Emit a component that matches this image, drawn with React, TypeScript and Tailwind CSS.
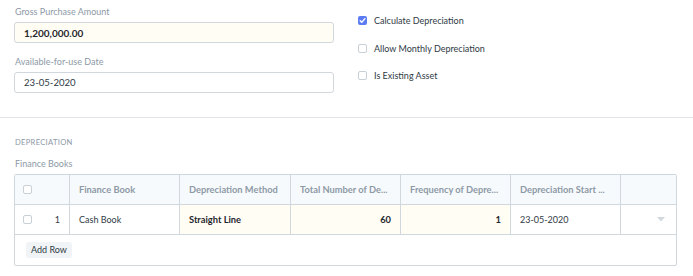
import React from "react";

const font = { fontFamily: 'Lato, "Noto Sans", sans-serif' };

function Box({ checked = false }: { checked?: boolean }) {
  if (checked) {
    return (
      <div className="w-[9px] h-[9px] rounded-[2px] bg-[#5b7cf2] flex items-center justify-center shrink-0">
        <svg width="7" height="7" viewBox="0 0 8 8">
          <path d="M1.3 4.2 L3.2 6 L6.8 1.8" stroke="white" strokeWidth="1.5" fill="none" strokeLinecap="round" strokeLinejoin="round" />
        </svg>
      </div>
    );
  }
  return <div className="w-[9px] h-[9px] rounded-[2px] border border-[#c8cfd5] bg-white shrink-0" />;
}

export default function App() {
  const cols = "grid-cols-[55px_110px_111px_110px_110px_110px_56px]";
  const cell = "flex items-center px-[9px] border-r border-[#d1d8dd] whitespace-nowrap";
  return (
    <div className="w-[693px] h-[276px] bg-white text-[#2f3a44] overflow-hidden text-[9px] leading-[12px]" style={font}>
      <div className="flex px-[14px] h-[117px]">
        <div className="w-[320px] flex flex-col pt-[6px]">
          <div className="h-[12px] pl-[1px] text-[#8d99a6]">Gross Purchase Amount</div>
          <div className="mt-[4px] h-[21px] border border-[#d1d8dd] rounded-[3px] bg-[#fffdf4] flex items-center px-[9px] text-[10px] font-bold text-[#1f272e]">
            1,200,000.00
          </div>
          <div className="mt-[13px] h-[12px] pl-[1px] text-[#8d99a6]">Available-for-use Date</div>
          <div className="mt-[4px] h-[21px] border border-[#d1d8dd] rounded-[3px] bg-white flex items-center px-[9px] text-[9.6px]">
            23-05-2020
          </div>
        </div>
        <div className="ml-[24px] flex flex-col pt-[14px]">
          <div className="h-[13px] flex items-center gap-[7px]">
            <Box checked />
            <span>Calculate Depreciation</span>
          </div>
          <div className="h-[13px] mt-[15px] flex items-center gap-[7px]">
            <Box />
            <span>Allow Monthly Depreciation</span>
          </div>
          <div className="h-[13px] mt-[14px] flex items-center gap-[7px]">
            <Box />
            <span>Is Existing Asset</span>
          </div>
        </div>
      </div>
      <div className="border-t border-[#e1e6ea]" />
      <div className="px-[14px]">
        <div className="mt-[18px] h-[12px] pl-[1px] text-[7.6px] tracking-[0.3px] text-[#8d99a6]">DEPRECIATION</div>
        <div className="mt-[10px] h-[12px] pl-[1px] text-[#8d99a6]">Finance Books</div>
        <div className="mt-[4px] w-[663px] border border-[#d1d8dd] rounded-[2px]">
          <div className={`grid ${cols} h-[30px] bg-[#f7fafc] border-b border-[#d1d8dd] font-bold text-[9.3px] text-[#8d99a6]`}>
            <div className="flex items-center pl-[8px] border-r border-[#d1d8dd]"><Box /></div>
            <div className={cell}>Finance Book</div>
            <div className={cell}>Depreciation Method</div>
            <div className={cell}>Total Number of De...</div>
            <div className={cell}>Frequency of Depre...</div>
            <div className={cell}>Depreciation Start ...</div>
            <div />
          </div>
          <div className={`grid ${cols} h-[30px] border-b border-[#d1d8dd]`}>
            <div className="flex items-center justify-between pl-[8px] pr-[9px] border-r border-[#d1d8dd]">
              <Box />
              <span>1</span>
            </div>
            <div className={cell}>Cash Book</div>
            <div className={`${cell} bg-[#fffdf4] font-bold text-[9.3px] text-[#1f272e]`}>Straight Line</div>
            <div className={`${cell} justify-end bg-[#fffdf4] font-bold text-[9.3px] text-[#1f272e]`}>60</div>
            <div className={`${cell} justify-end bg-[#fffdf4] font-bold text-[9.3px] text-[#1f272e]`}>1</div>
            <div className={cell}>23-05-2020</div>
            <div className="flex items-center justify-end pr-[12px]">
              <svg width="8" height="5" viewBox="0 0 8 5"><path d="M0 0 H8 L4 4.5 Z" fill="#d1d8dd" /></svg>
            </div>
          </div>
          <div className="h-[30px] flex items-center pl-[11px]">
            <div className="h-[16px] px-[5px] rounded-[3px] bg-[#f0f4f7] flex items-center">Add Row</div>
          </div>
        </div>
      </div>
    </div>
  );
}
